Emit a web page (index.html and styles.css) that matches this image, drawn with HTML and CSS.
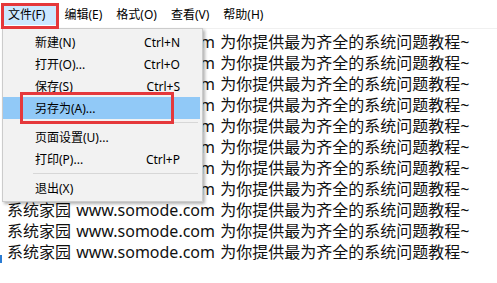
FILE: index.html
```html
<!DOCTYPE html>
<html lang="zh-CN">
<head>
    <meta charset="UTF-8">
    <title>记事本</title>
    <link rel="stylesheet" href="styles.css">
</head>
<body>
    <div class="menubar">
        <span class="menu-item active">文件(F)</span>
        <span class="menu-item">编辑(E)</span>
        <span class="menu-item">格式(O)</span>
        <span class="menu-item">查看(V)</span>
        <span class="menu-item">帮助(H)</span>
    </div>

    <div class="editor">
        <div class="line">系统家园 www.somode.com 为你提供最为齐全的系统问题教程~</div>
        <div class="line">系统家园 www.somode.com 为你提供最为齐全的系统问题教程~</div>
        <div class="line">系统家园 www.somode.com 为你提供最为齐全的系统问题教程~</div>
        <div class="line">系统家园 www.somode.com 为你提供最为齐全的系统问题教程~</div>
        <div class="line">系统家园 www.somode.com 为你提供最为齐全的系统问题教程~</div>
        <div class="line">系统家园 www.somode.com 为你提供最为齐全的系统问题教程~</div>
        <div class="line">系统家园 www.somode.com 为你提供最为齐全的系统问题教程~</div>
        <div class="line">系统家园 www.somode.com 为你提供最为齐全的系统问题教程~</div>
        <div class="line">系统家园 www.somode.com 为你提供最为齐全的系统问题教程~</div>
        <div class="line">系统家园 www.somode.com 为你提供最为齐全的系统问题教程~</div>
        <div class="line">系统家园 www.somode.com 为你提供最为齐全的系统问题教程~</div>
        <div class="edge"></div>
    </div>

    <!-- 下拉菜单 -->
    <div class="dropdown">
        <div class="drop-item"><span>新建(N)</span><span>Ctrl+N</span></div>
        <div class="drop-item"><span>打开(O)...</span><span>Ctrl+O</span></div>
        <div class="drop-item"><span>保存(S)</span><span>Ctrl+S</span></div>
        <div class="drop-item hover"><span>另存为(A)...</span><span></span></div>
        <div class="separator"></div>
        <div class="drop-item"><span>页面设置(U)...</span><span></span></div>
        <div class="drop-item"><span>打印(P)...</span><span>Ctrl+P</span></div>
        <div class="separator"></div>
        <div class="drop-item"><span>退出(X)</span><span></span></div>
    </div>

    <div class="mark mark-file"></div>
    <div class="mark mark-saveas"></div>
</body>
</html>
```

FILE: styles.css
```css
body { margin: 0; background: #fff; color: #000; font-family: "Noto Sans", "Noto Sans CJK SC", sans-serif; overflow: hidden; }
.menubar { display: flex; align-items: center; height: 28px; padding-left: 3px; border-bottom: 1px solid #f0f0f0; font-size: 12px; }
.menu-item { height: 21px; line-height: 21px; padding: 0 7px 0 7px; }
.menu-item.active { background: #cce8ff; padding: 0 12px 0 5px; }
.editor { position: relative; padding: 3px 0 0 7px; font-size: 16px; line-height: 21px; color: #111; word-spacing: 1px; }
.line { white-space: nowrap; }
.edge { position: absolute; left: 0; top: 226px; width: 2px; height: 40px; background: #2b7cd3; }
.dropdown { position: absolute; left: 2px; top: 28px; width: 199px; padding: 2px 0 2px; background: #f2f2f2; border: 1px solid #cccccc; box-shadow: 2px 2px 3px rgba(0,0,0,0.3); font-size: 12px; }
.drop-item { display: flex; justify-content: space-between; align-items: center; height: 22px; padding: 0 20px 0 32px; margin-right: 2px; }
.drop-item.hover { background: #91c9f7; }
.separator { height: 1px; background: #d7d7d7; margin: 3px 4px 3px 30px; }
.mark { position: absolute; border: 3px solid #e5383b; box-sizing: border-box; }
.mark-file { left: 1px; top: 3px; width: 58px; height: 26px; }
.mark-saveas { left: 20px; top: 92px; width: 154px; height: 32px; }
```
